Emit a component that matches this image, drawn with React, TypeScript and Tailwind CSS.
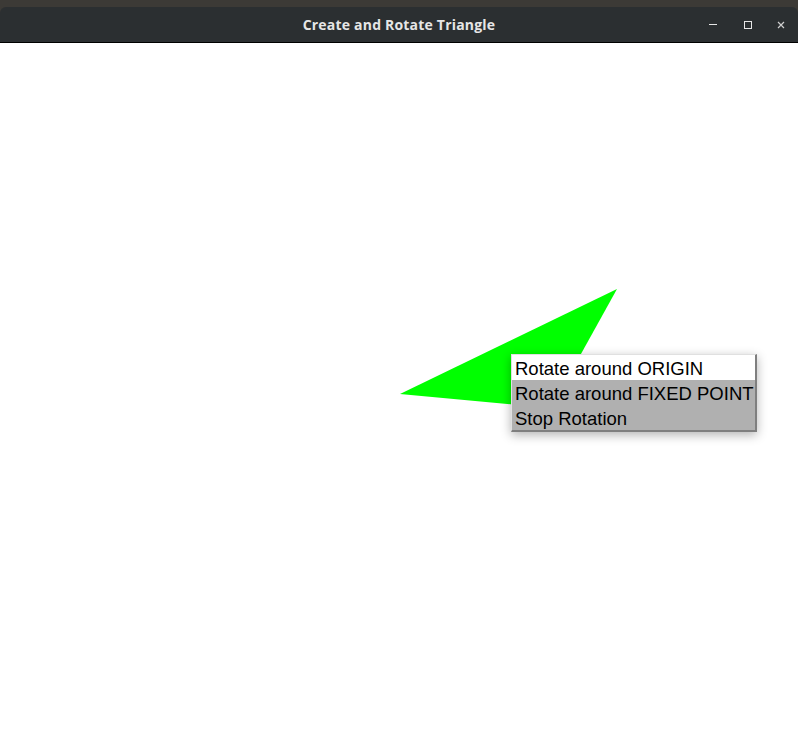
export default function App() {
  const items = ["Rotate around ORIGIN", "Rotate around FIXED POINT", "Stop Rotation"];
  return (
    <div className="flex h-[747px] w-[798px] flex-col overflow-hidden bg-[#3c3a36]">
      <div className="h-[7px] shrink-0" />
      <header className="relative flex h-[36px] shrink-0 items-center justify-center rounded-t-[6px] border-b border-black bg-[#2b2f31]">
        <span className="font-['Open_Sans',sans-serif] text-[14px] font-bold tracking-[0.2px] text-[#e6e6e6]">
          Create and Rotate Triangle
        </span>
        <div className="absolute right-0 top-0 flex h-full items-center">
          <div className="flex w-[33px] justify-center pr-[3px]">
            <div className="h-px w-[8px] bg-[#e6e6e6]" />
          </div>
          <div className="flex w-[33px] justify-center">
            <div className="h-[8px] w-[8px] border border-[#e6e6e6]" />
          </div>
          <div className="flex w-[34px] justify-center">
            <svg width="8" height="8" viewBox="0 0 8 8">
              <path d="M1 1L7 7M7 1L1 7" stroke="#cfcfcf" strokeWidth="1.2" />
            </svg>
          </div>
        </div>
      </header>
      <main className="relative flex-1 bg-white">
        <svg className="absolute left-0 top-0" width="798" height="703" viewBox="0 44 798 703">
          <polygon points="617,290 400,395 551,409" fill="#00ff00" />
        </svg>
        <div className="absolute left-[511px] top-[311px] w-[246px] border-b-2 border-l border-r-2 border-t border-b-[#7f7f7f] border-l-[#e0e0e0] border-r-[#7f7f7f] border-t-[#e0e0e0] bg-[#b0b0b0] shadow-[0_3px_10px_rgba(0,0,0,0.3)]">
          {items.map((label, i) => (
            <div
              key={label}
              className={
                "flex h-[25px] items-center pl-[3px] pt-[3px] font-['Liberation_Sans',sans-serif] text-[18.5px] leading-none text-black " +
                (i === 0 ? "bg-white" : "bg-[#b0b0b0]")
              }
            >
              {label}
            </div>
          ))}
        </div>
      </main>
    </div>
  );
}
